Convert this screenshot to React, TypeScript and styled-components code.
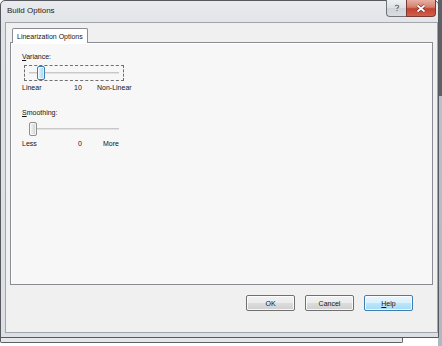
import React from "react";
import styled, { createGlobalStyle, css } from "styled-components";

const GlobalStyle = createGlobalStyle`
  html, body {
    margin: 0;
    padding: 0;
    background: #ffffff;
    overflow: hidden;
  }
`;

const Desktop = styled.div`
  position: relative;
  width: 442px;
  height: 346px;
  overflow: hidden;
  font-family: "Liberation Sans", Arial, sans-serif;
`;

const BackWindow = styled.div`
  position: absolute;
  left: 0;
  top: 330px;
  width: 401px;
  height: 12px;
  background: #e4e6e9;
  border: 1px solid #5c5f63;
  border-top: none;
  border-radius: 0 0 2px 2px;
`;

const SideStrip = styled.div`
  position: absolute;
  left: 438px;
  top: 0;
  width: 4px;
  height: 346px;
  background: linear-gradient(#5d6066 0, #5d6066 96px, #b9c2cc 96px, #aeb8c3 100%);
`;

const Window = styled.div`
  position: absolute;
  left: 0;
  top: 0;
  width: 439px;
  height: 338px;
  display: flex;
  flex-direction: column;
  padding: 0 0 4px 4px;
  box-sizing: border-box;
  border: 1px solid #56595e;
  border-radius: 5px 5px 0 0;
  background: linear-gradient(#e9ebee, #dfe2e6 30px, #dcdfe3);
`;

const TitleBar = styled.div`
  height: 21px;
  display: flex;
  align-items: flex-start;
  justify-content: space-between;
`;

const Title = styled.span`
  margin: 5px 0 0 2px;
  font-size: 8px;
  color: #1c1c1c;
`;

const CaptionButtons = styled.div`
  display: flex;
  margin-right: 2px;
  margin-top: -1px;
`;

const CaptionButton = styled.div<{ $close?: boolean }>`
  height: 17px;
  display: flex;
  align-items: center;
  justify-content: center;
  box-sizing: border-box;
  border: 1px solid #70747a;
  border-top: none;
  ${(p) =>
    p.$close
      ? css`
          width: 30px;
          border-radius: 0 0 4px 0;
          border-color: #7a3a32;
          background: linear-gradient(#e7b0a4, #d67f6d 45%, #c4412e 55%, #d0604c);
        `
      : css`
          width: 20px;
          border-right: none;
          border-radius: 0 0 0 4px;
          background: linear-gradient(#eef0f2, #dde0e4 50%, #cfd3d8 51%, #dadde1);
        `}
`;

const Client = styled.div`
  flex: 1;
  display: flex;
  flex-direction: column;
  background: #f0f0f0;
  border: 1px solid #a2a6ab;
  padding: 5px 4px 21px 4px;
  font-size: 7px;
  color: #151515;
`;

const TabStrip = styled.div`
  display: flex;
  padding-left: 2px;
  position: relative;
  z-index: 1;
  margin-bottom: -1px;
`;

const Tab = styled.div`
  height: 14px;
  padding: 0 4px;
  display: flex;
  align-items: center;
  background: #ffffff;
  border: 1px solid #898c95;
  border-bottom: none;
  border-radius: 2px 2px 0 0;
  font-size: 7px;
`;

const TabPanel = styled.div`
  flex: 1;
  background: #f7f7f7;
  border: 1px solid #898c95;
  box-shadow: inset 1px 1px 0 #ffffff;
  padding: 9px 0 0 11px;
  display: flex;
  flex-direction: column;
`;

const FieldLabel = styled.div<{ $top?: number }>`
  margin-top: ${(p) => p.$top ?? 0}px;
  height: 10px;
  line-height: 10px;
`;

const Key = styled.span`
  text-decoration: underline;
`;

const SliderBox = styled.div<{ $focus?: boolean }>`
  position: relative;
  margin: 3px 0 0 2px;
  width: 100px;
  height: 16px;
  box-sizing: border-box;
  border: 1px dashed ${(p) => (p.$focus ? "#6f6f6f" : "transparent")};
`;

const Track = styled.div`
  position: absolute;
  left: 4px;
  right: 4px;
  top: 6px;
  height: 2px;
  background: #e2e2e2;
  border-top: 1px solid #c8c8c8;
  box-sizing: border-box;
`;

const Thumb = styled.div<{ $active?: boolean }>`
  position: absolute;
  top: 0;
  width: 8px;
  height: 14px;
  box-sizing: border-box;
  border-radius: 2px;
  border: 1px solid ${(p) => (p.$active ? "#3c7fb1" : "#8e8f8f")};
  background: ${(p) =>
    p.$active
      ? "linear-gradient(90deg, #e5f4fc, #c4e5f6 50%, #98d1ef)"
      : "linear-gradient(90deg, #f6f6f6, #e3e3e3 50%, #cfcfcf)"};
  box-shadow: inset 0 0 0 1px rgba(255, 255, 255, 0.7);
`;

const ScaleRow = styled.div<{ $cols: string }>`
  display: grid;
  grid-template-columns: ${(p) => p.$cols};
  height: 10px;
  line-height: 10px;
  margin-top: 2px;
  width: 112px;
`;

const ButtonRow = styled.div`
  display: flex;
  justify-content: flex-end;
  gap: 10px;
  padding: 10px 20px 0 0;
`;

const Button = styled.div<{ $default?: boolean }>`
  width: 49px;
  height: 16px;
  box-sizing: border-box;
  display: flex;
  align-items: center;
  justify-content: center;
  font-size: 7px;
  border-radius: 2px;
  border: 1px solid ${(p) => (p.$default ? "#3c7fb1" : "#707070")};
  background: ${(p) =>
    p.$default
      ? "linear-gradient(#eaf6fd, #d9f0fc 50%, #bee6fd 51%, #a7d9f5)"
      : "linear-gradient(#f2f2f2, #ebebeb 50%, #dddddd 51%, #cfcfcf)"};
  box-shadow: inset 0 0 0 1px rgba(255, 255, 255, 0.8);
`;

function Slider({ pos, focus }: { pos: number; focus?: boolean }) {
  return (
    <SliderBox $focus={focus}>
      <Track />
      <Thumb $active={focus} style={{ left: pos }} />
    </SliderBox>
  );
}

export default function App() {
  return (
    <Desktop>
      <GlobalStyle />
      <BackWindow />
      <SideStrip />
      <Window>
        <TitleBar>
          <Title>Build Options</Title>
          <CaptionButtons>
            <CaptionButton>
              <svg width="6" height="8" viewBox="0 0 6 8">
                <path
                  d="M1.2 2.3 C1.2 0.9 4.8 0.9 4.8 2.4 C4.8 3.5 3 3.6 3 5"
                  fill="none"
                  stroke="#6a6f76"
                  strokeWidth="1.1"
                />
                <rect x="2.45" y="6" width="1.1" height="1.1" fill="#6a6f76" />
              </svg>
            </CaptionButton>
            <CaptionButton $close>
              <svg width="12" height="9" viewBox="0 0 12 9">
                <path d="M2.5 1.5 L9.5 7.5 M9.5 1.5 L2.5 7.5" stroke="#6a2f27" strokeWidth="3.2" />
                <path d="M2.5 1.5 L9.5 7.5 M9.5 1.5 L2.5 7.5" stroke="#ffffff" strokeWidth="1.8" />
              </svg>
            </CaptionButton>
          </CaptionButtons>
        </TitleBar>
        <Client>
          <TabStrip>
            <Tab>Linearization Options</Tab>
          </TabStrip>
          <TabPanel>
            <FieldLabel>
              <Key>V</Key>ariance:
            </FieldLabel>
            <Slider pos={12} focus />
            <ScaleRow $cols="52px 23px auto">
              <span>Linear</span>
              <span>10</span>
              <span>Non-Linear</span>
            </ScaleRow>
            <FieldLabel $top={15}>
              <Key>S</Key>moothing:
            </FieldLabel>
            <Slider pos={4} />
            <ScaleRow $cols="56px 25px auto">
              <span>Less</span>
              <span>0</span>
              <span>More</span>
            </ScaleRow>
          </TabPanel>
          <ButtonRow>
            <Button>OK</Button>
            <Button>Cancel</Button>
            <Button $default>
              <span>
                <Key>H</Key>elp
              </span>
            </Button>
          </ButtonRow>
        </Client>
      </Window>
    </Desktop>
  );
}
